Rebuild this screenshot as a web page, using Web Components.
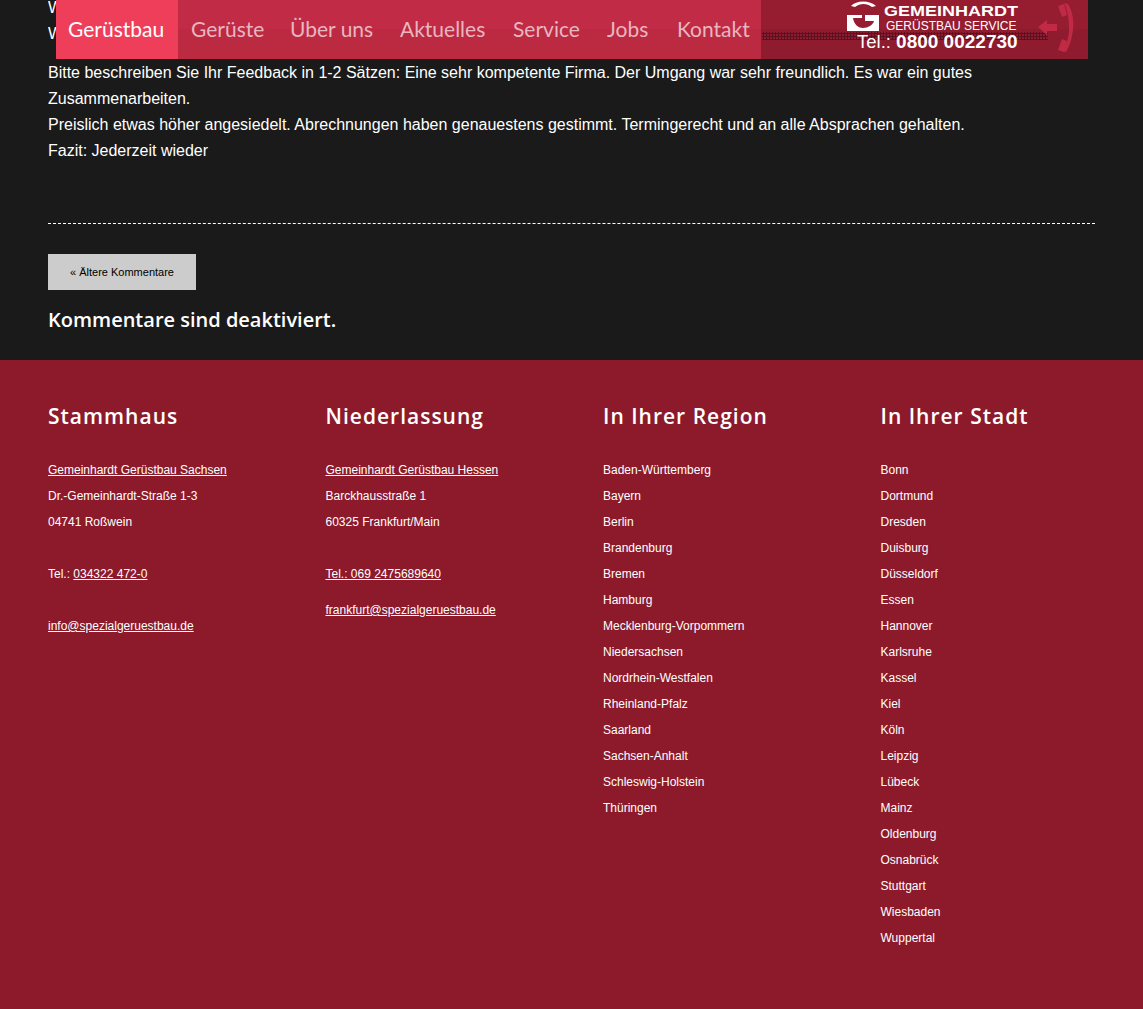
<!DOCTYPE html>
<html lang="de">
<head>
<meta charset="utf-8">
<title>Gemeinhardt Gerüstbau</title>
<style>
  html, body { margin: 0; padding: 0; background: #1a1a1a; }
  body { font-family: "Liberation Sans", Arial, sans-serif; height: 1009px; overflow: hidden; }
</style>
</head>
<body>
<site-nav></site-nav>
<comment-body>
  <p>W</p>
  <p>W</p>
  <p class="feedback">Bitte beschreiben Sie Ihr Feedback in 1-2 Sätzen: Eine sehr kompetente Firma. Der Umgang war sehr freundlich. Es war ein gutes Zusammenarbeiten.<br>Preislich etwas höher angesiedelt. Abrechnungen haben genauestens gestimmt. Termingerecht und an alle Absprachen gehalten.<br>Fazit: Jederzeit wieder</p>
</comment-body>
<site-footer>
  <footer-col title="Stammhaus">
    <a href="#">Gemeinhardt Gerüstbau Sachsen</a><br>
    Dr.-Gemeinhardt-Straße 1-3<br>
    04741 Roßwein<br>
    <br>
    Tel.: <a href="#">034322 472-0</a><br>
    <br>
    <a href="#">info@spezialgeruestbau.de</a>
  </footer-col>
  <footer-col title="Niederlassung">
    <a href="#">Gemeinhardt Gerüstbau Hessen</a><br>
    Barckhausstraße 1<br>
    60325 Frankfurt/Main<br>
    <br>
    <a href="#">Tel.: 069 2475689640</a><br>
    <span style="display:block;height:10px"></span>
    <a href="#">frankfurt@spezialgeruestbau.de</a>
  </footer-col>
  <footer-col title="In Ihrer Region">
    Baden-Württemberg<br>Bayern<br>Berlin<br>Brandenburg<br>Bremen<br>Hamburg<br>Mecklenburg-Vorpommern<br>Niedersachsen<br>Nordrhein-Westfalen<br>Rheinland-Pfalz<br>Saarland<br>Sachsen-Anhalt<br>Schleswig-Holstein<br>Thüringen
  </footer-col>
  <footer-col title="In Ihrer Stadt">
    Bonn<br>Dortmund<br>Dresden<br>Duisburg<br>Düsseldorf<br>Essen<br>Hannover<br>Karlsruhe<br>Kassel<br>Kiel<br>Köln<br>Leipzig<br>Lübeck<br>Mainz<br>Oldenburg<br>Osnabrück<br>Stuttgart<br>Wiesbaden<br>Wuppertal
  </footer-col>
</site-footer>
<script>
class SiteNav extends HTMLElement {
  constructor() {
    super();
    this.shadowDOM = this.attachShadow({ mode: "open" });
  }
  connectedCallback() {
    const items = [["Gerüstbau", 122], ["Gerüste", 99], ["Über uns", 110], ["Aktuelles", 113], ["Service", 94], ["Jobs", 70], ["Kontakt", 97]];
    this.shadowDOM.innerHTML = `
    <style>
      :host { display: flex; position: absolute; top: 0; left: 56px; width: 1032px; height: 59px; z-index: 5; }
      nav { display: flex; flex: none; width: 705px; background: linear-gradient(#c12b45 0 29px, #bc2a42 29px); }
      a { display: flex; flex: none; box-sizing: border-box; align-items: center; padding: 0 0 3px 13px; font: 21px Lato, sans-serif; white-space: nowrap; color: #e8b6c0; text-decoration: none; }
      a.on { background: #ef3e5a; color: #fff; padding-left: 12px; }
      .brand { flex: 1; position: relative; background: linear-gradient(#961c30 0 29px, #8f1b2e 29px); color: #fff; }
      .dots { position: absolute; left: 1px; width: 286px; top: 32px; height: 8px;
        background: radial-gradient(circle, #5c1020 1px, transparent 1.2px) 0 0 / 3px 3px; }
      .logo { position: absolute; left: 86px; top: 0; }
      .t1, .t2, .t3 { position: absolute; white-space: nowrap; line-height: 1; }
      .t1 { left: 123px; top: 3px; font-weight: bold; font-size: 15px; transform: scaleX(1.2); transform-origin: left; }
      .t2 { left: 125px; top: 20px; font-size: 12px; }
      .t3 { left: 96px; top: 32px; font-size: 18.5px; }
      .t3 b { font-size: 19px; }
      .phone { position: absolute; left: 275px; top: 0; }
    </style>
    <nav>${items.map(([t, w], i) => `<a href="#" class="${i === 0 ? "on" : ""}" style="width:${w}px">${t}</a>`).join("")}</nav>
    <div class="brand">
      <div class="dots"></div>
      <svg class="logo" width="33" height="33" viewBox="0 0 33 33" fill="#fff">
        <path d="M4 6 C9 0 23 0 29 6 L25 7 C20 3 13 3 8 7 Z"/>
        <path d="M0 15 H15 V18 H6 C7 25 12 28 16 28 C21 28 26 25 27 21 H18 V15 H32 V31 H0 Z" fill-rule="evenodd"/>
      </svg>
      <span class="t1">GEMEINHARDT</span>
      <span class="t2">GERÜSTBAU SERVICE</span>
      <span class="t3">Tel.: <b>0800 0022730</b></span>
      <svg class="phone" width="40" height="55" viewBox="0 0 40 55" fill="#c02a44">
        <path d="M2 27 L11 20 V24 H21 V31 H11 V35 Z"/>
        <path d="M28 3 L32 4 C37 12 38 22 37 30 C36 38 34 45 30 52 L26 51 C31 44 33 37 33 29 C33 20 32 11 28 3 Z"/>
        <path d="M22 6 L28 4 L31 15 L26 17 Z"/>
        <path d="M26 39 L31 41 L28 52 L22 50 Z"/>
      </svg>
    </div>`;
  }
}
customElements.define("site-nav", SiteNav);

class CommentBody extends HTMLElement {
  constructor() {
    super();
    this.attachShadow({ mode: "open" }).innerHTML = `
    <style>
      :host { display: block; height: 360px; box-sizing: border-box; padding: 0 48px; color: #fff; font-size: 16px; line-height: 26px; }
      .text { height: 223px; overflow: hidden; }
      .inner { margin-top: -5px; }
      ::slotted(p) { margin: 0; }
      ::slotted(p.feedback) { margin-top: 13px; }
      hr { border: 0; border-top: 1px dashed #fff; margin: 0; }
      a { display: block; width: 148px; height: 36px; margin-top: 30px; background: #ccc; color: #000; font-size: 11px; line-height: 36px; text-align: center; text-decoration: none; }
      h3 { margin: 15px 0 0; font: 600 20px/30px "Open Sans", sans-serif; color: #fff; }
    </style>
    <div class="text"><div class="inner"><slot></slot></div></div>
    <hr>
    <a href="#">« Ältere Kommentare</a>
    <h3>Kommentare sind deaktiviert.</h3>`;
  }
}
customElements.define("comment-body", CommentBody);

class SiteFooter extends HTMLElement {
  constructor() {
    super();
    this.attachShadow({ mode: "open" }).innerHTML = `
    <style>
      :host { display: grid; grid-template-columns: repeat(4, 1fr); column-gap: 63px; height: 649px; box-sizing: border-box; padding: 39px 48px 0; background: #8c1a2b; }
    </style>
    <slot></slot>`;
  }
}
customElements.define("site-footer", SiteFooter);

class FooterCol extends HTMLElement {
  constructor() {
    super();
    this.attachShadow({ mode: "open" }).innerHTML = `
    <style>
      :host { display: block; color: #fff; font-size: 12px; line-height: 26px; }
      h4 { margin: 0 0 24px; font: 600 21px/34px "Open Sans", sans-serif; letter-spacing: 1px; color: #fff; }
      ::slotted(a) { color: #fff; text-decoration: underline; }
    </style>
    <h4></h4>
    <slot></slot>`;
    this.shadowRoot.querySelector("h4").textContent = this.getAttribute("title");
  }
}
customElements.define("footer-col", FooterCol);
</script>
</body>
</html>
